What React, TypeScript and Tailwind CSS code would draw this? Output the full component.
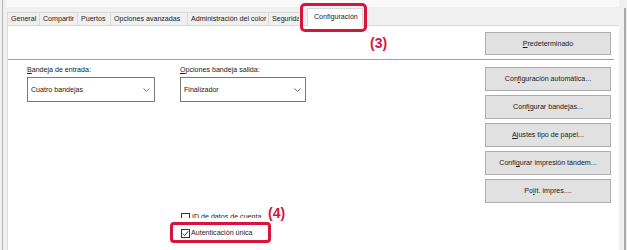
// Printer properties dialog — "Configuración" tab, with the two red
// callouts (3) and (4) drawn over the dialog.

const RED = "border-[#d9133d]";

type Tab = { label: string; width: string };

const tabs: Tab[] = [
  { label: "General", width: "w-[32px]" },
  { label: "Compartir", width: "w-[38px]" },
  { label: "Puertos", width: "w-[33px]" },
  { label: "Opciones avanzadas", width: "w-[77px]" },
  { label: "Administración del color", width: "w-[81px]" },
  { label: "Seguridad", width: "w-[31px]" },
];

function Chevron() {
  return (
    <svg width="7" height="4" viewBox="0 0 7 4" className="mr-[4px] shrink-0">
      <path d="M0.5 0.5 L3.5 3.5 L6.5 0.5" fill="none" stroke="#606060" strokeWidth="0.9" />
    </svg>
  );
}

function Select({ value, width }: { value: string; width: string }) {
  return (
    <div
      className={`${width} flex h-[25px] items-center justify-between border border-[#7a7a7a] bg-white pl-[3px]`}
    >
      <span>{value}</span>
      <Chevron />
    </div>
  );
}

function Button({ children }: { children: React.ReactNode }) {
  return (
    <div className="flex h-[24px] w-[126px] items-center justify-center border border-[#adadad] bg-[#e1e1e1]">
      {children}
    </div>
  );
}

function Box({ checked }: { checked?: boolean }) {
  return (
    <div className="flex h-[9px] w-[9px] shrink-0 items-center justify-center border border-[#333] bg-white">
      {checked ? (
        <svg width="7" height="7" viewBox="0 0 7 7">
          <path d="M0.8 3.6 L2.7 5.5 L6.2 1.2" fill="none" stroke="#222" strokeWidth="0.9" />
        </svg>
      ) : null}
    </div>
  );
}

export default function App() {
  return (
    <div
      className="relative flex h-[250px] w-[627px] overflow-hidden bg-[#f0f0f0] text-[7.1px] leading-[10px] text-[#1a1a1a]"
      style={{ fontFamily: '"Liberation Sans", Arial, sans-serif' }}
    >
      {/* left window edge */}
      <div className="w-[2px]" />
      <div className="w-px bg-[#b4b4b4]" />
      <div className="w-[4px]" />

      <div className="flex flex-1 flex-col">
        {/* tab strip */}
        <div className="flex h-[25px] flex-col">
          <div className="h-[7px] bg-[#f9f9f9]" />
          <div className="flex flex-1 items-end">
            {tabs.map((t) => (
              <div
                key={t.label}
                className={`${t.width} flex h-[13px] items-center overflow-hidden whitespace-nowrap border-l border-t border-[#d9d9d9] bg-[#f0f0f0] pl-[3px]`}
              >
                {t.label}
              </div>
            ))}
            <div className="w-[8px]" />
            <div className="relative z-10 -mb-px flex h-[18px] w-[56px] items-center border-l border-r border-t border-[#d9d9d9] bg-white pb-[2px] pl-[6px]">
              Configuración
            </div>
          </div>
        </div>

        {/* tab page */}
        <div className="flex flex-1 flex-col border-l border-t border-[#d9d9d9] bg-white">
          <div className="flex justify-end pr-[8px] pt-[6px]">
            <div className="flex h-[23px] w-[126px] items-center justify-center border border-[#adadad] bg-[#e1e1e1]">
              <span>
                <span className="underline">P</span>redeterminado
              </span>
            </div>
          </div>
          <div className="mr-[5px] mt-[4px] h-px bg-[#a0a0a0]" />

          <div className="flex justify-between">
            <div className="flex gap-[25px] pl-[19px] pt-[5px]">
              <div className="flex flex-col">
                <span className="mb-[2px]">
                  <span className="underline">B</span>andeja de entrada:
                </span>
                <Select value="Cuatro bandejas" width="w-[128px]" />
              </div>
              <div className="flex flex-col">
                <span className="mb-[2px]">
                  <span className="underline">O</span>pciones bandeja salida:
                </span>
                <Select value="Finalizador" width="w-[126px]" />

                <div className="ml-[1px] mt-[111px] flex h-[5px] items-start gap-[2px] overflow-hidden">
                  <Box />
                  <span className="-mt-[1px] whitespace-nowrap">ID de datos de cuenta</span>
                </div>
                <div className="ml-[1px] mt-[10px] flex items-center gap-[1px]">
                  <Box checked />
                  <span className="whitespace-nowrap">Autenticación única</span>
                </div>
              </div>
            </div>

            <div className="flex flex-col gap-[4px] pr-[8px] pt-[7px]">
              <Button>
                <span>
                  Con<span className="underline">f</span>iguración automática...
                </span>
              </Button>
              <Button>
                <span>
                  Conf<span className="underline">i</span>gurar bandejas...
                </span>
              </Button>
              <Button>
                <span>
                  <span className="underline">A</span>justes tipo de papel...
                </span>
              </Button>
              <Button>
                <span>
                  Confi<span className="underline">g</span>urar impresión tándem...
                </span>
              </Button>
              <Button>
                <span>
                  Po<span className="underline">l</span>ít. impres....
                </span>
              </Button>
            </div>
          </div>
        </div>
      </div>

      {/* right window edge */}
      <div className="w-[5px]" />
      <div className="mt-[8px] w-[2px] bg-[#a8a8a8]" />
      <div className="w-px" />

      {/* callouts */}
      <div className={`absolute left-[300px] top-[3px] h-[29px] w-[67px] rounded-[5px] border-[3px] ${RED}`} />
      <div className="absolute left-[370px] top-[35px] text-[14px] font-bold leading-[16px] text-[#d9133d]">
        (3)
      </div>
      <div className={`absolute left-[170px] top-[222px] h-[21px] w-[101px] rounded-[4px] border-[3px] ${RED}`} />
      <div className="absolute left-[268px] top-[205px] text-[14px] font-bold leading-[16px] text-[#d9133d]">
        (4)
      </div>
    </div>
  );
}
